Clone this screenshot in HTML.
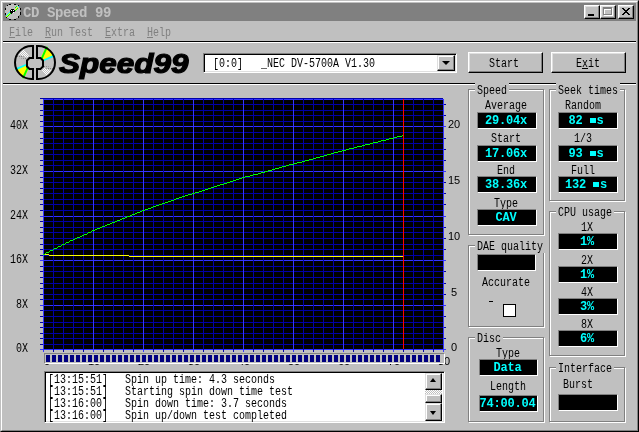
<!DOCTYPE html>
<html><head><meta charset="utf-8">
<style>
*{margin:0;padding:0;box-sizing:border-box}
html,body{width:639px;height:432px;overflow:hidden;background:#c0c0c0}
body{position:relative;font-family:"Liberation Mono",monospace;will-change:transform}
.a{position:absolute}
.t{position:absolute;font-family:"Liberation Mono",monospace;font-size:12px;line-height:12px;padding-top:1px;white-space:pre;color:#000;transform:scaleX(0.83333);transform-origin:0 0}
.v{position:absolute;font-family:"Liberation Mono",monospace;font-size:12px;font-weight:bold;letter-spacing:-0.2px;line-height:12px;white-space:pre;color:#00ffff;text-align:center}
.field{position:absolute;background:#000;border-top:1px solid #808080;border-left:1px solid #808080;border-right:1px solid #fff;border-bottom:1px solid #fff}
.gd{position:absolute;border:1px solid #808080}
.gw{position:absolute;border:1px solid #fff}
.lbl{position:absolute;background:#c0c0c0;height:14px}
.btn{position:absolute;background:#c0c0c0;border-top:1px solid #fff;border-left:1px solid #fff;border-right:1px solid #000;border-bottom:1px solid #000;box-shadow:inset -1px -1px 0 #808080, inset 1px 1px 0 #dfdfdf}
.sbtn{position:absolute;background:#c0c0c0;border-top:1px solid #dfdfdf;border-left:1px solid #dfdfdf;border-right:1px solid #000;border-bottom:1px solid #000;box-shadow:inset -1px -1px 0 #808080, inset 1px 1px 0 #fff}
.ul{text-decoration:underline}
.blk{display:inline-block;width:6px;height:5px;background:#00ffff;margin-right:1px;vertical-align:1px}
.ax{position:absolute;font-family:"Liberation Sans",sans-serif;font-size:11px;line-height:12px;color:#000;white-space:pre;text-align:center;width:20px}
</style></head><body>
<!-- window frame -->
<div class="a" style="left:0;top:0;width:639px;height:432px;border-top:1px solid #c0c0c0;border-left:1px solid #c0c0c0;border-right:1px solid #000;border-bottom:1px solid #000"></div>
<div class="a" style="left:1px;top:1px;width:637px;height:430px;border-top:1px solid #fff;border-left:1px solid #fff;border-right:1px solid #808080;border-bottom:1px solid #808080"></div>
<!-- title bar -->
<div class="a" style="left:3px;top:3px;width:633px;height:18px;background:#808080"></div>
<svg class="a" style="left:0;top:0" width="24" height="24" shape-rendering="crispEdges">
 <path d="M9 4h7v1h2v1h1v2h1v7h-1v2h-1v1h-2v1h-7v-1h-2v-1h-1v-2h-1v-7h1v-2h1v-1h2z" fill="#c0c0c0"/>
 <path d="M9 4h2v1h-2zM14 4h2v1h-2zM18 5h1v2h-1zM20 8h1v2h-1zM20 12h1v3h-1zM18 16h1v2h-1zM14 19h2v1h-2zM9 19h2v1h-2zM6 17h1v1h-1zM5 13h1v2h-1zM5 8h1v2h-1zM7 5h1v1h-1z" fill="#000"/>
 <path d="M6 15h1v1h-1zM7 14h1v1h-1zM8 13h1v1h-1zM9 12h1v1h-1zM15 9h1v1h-1zM16 8h1v1h-1zM17 7h1v1h-1zM18 6h1v1h-1z" fill="#00ffff"/>
 <path d="M6 16h1v1h-1zM7 15h1v1h-1zM8 14h1v1h-1zM9 13h1v1h-1zM10 12h1v1h-1zM14 10h1v1h-1zM15 9h1v1h-1zM16 8h1v1h-1zM17 7h1v1h-1z" fill="#ffff00"/>
 <path d="M7 16h1v1h-1zM8 15h1v1h-1zM9 14h1v1h-1zM10 13h1v1h-1zM15 10h1v1h-1zM16 9h1v1h-1zM17 8h1v1h-1zM16 6h1v1h-1zM15 7h1v1h-1z" fill="#00ff00"/>
 <path d="M11 9h3v1h1v2h-1v1h-2v1h-1v-1h-1v-3h1z" fill="#000"/>
 <path d="M11 10h1v1h-1zM13 10h1v1h-1zM13 12h1v1h-1z" fill="#fff"/>
</svg>
<div class="a" style="left:23px;top:6px;font-family:'Liberation Mono',monospace;font-weight:bold;font-size:14px;letter-spacing:-0.4px;line-height:15px;color:#c0c0c0;white-space:pre">CD Speed 99</div>
<!-- title buttons -->
<div class="btn" style="left:584px;top:5px;width:16px;height:14px"></div>
<div class="a" style="left:588px;top:14px;width:6px;height:2px;background:#000"></div>
<div class="btn" style="left:600px;top:5px;width:16px;height:14px"></div>
<div class="a" style="left:604px;top:8px;width:9px;height:8px;border:1px solid #fff;border-top-width:2px"></div>
<div class="a" style="left:603px;top:7px;width:9px;height:8px;border:1px solid #808080;border-top-width:2px"></div>
<div class="btn" style="left:618px;top:5px;width:16px;height:14px"></div>
<svg class="a" style="left:618px;top:5px" width="16" height="14" shape-rendering="crispEdges">
 <path d="M4 3h2v1h-2zM10 3h2v1h-2zM5 4h2v1h-2zM9 4h2v1h-2zM6 5h4v1h-4zM7 6h2v1h-2zM6 7h4v1h-4zM5 8h2v1h-2zM9 8h2v1h-2zM4 9h2v1h-2zM10 9h2v1h-2z" fill="#000"/>
</svg>
<!-- menu -->
<div class="t" style="left:9px;top:26px;color:#808080"><span class="ul">F</span>ile</div>
<div class="t" style="left:45px;top:26px;color:#808080"><span class="ul">R</span>un Test</div>
<div class="t" style="left:105px;top:26px;color:#808080"><span class="ul">E</span>xtra</div>
<div class="t" style="left:147px;top:26px;color:#808080"><span class="ul">H</span>elp</div>
<div class="a" style="left:3px;top:41px;width:633px;height:1px;background:#000"></div>
<div class="a" style="left:3px;top:42px;width:633px;height:1px;background:#fff"></div>
<!-- logo -->
<svg class="a" style="left:0;top:0" width="639" height="100">
<defs><pattern id="chk" width="2" height="2" patternUnits="userSpaceOnUse"><rect width="2" height="2" fill="#c0c0c0"/><rect width="1" height="1" fill="#fff"/><rect x="1" y="1" width="1" height="1" fill="#fff"/></pattern><pattern id="chk2" width="2" height="2" patternUnits="userSpaceOnUse"><rect width="2" height="2" fill="#c0c0c0"/><rect width="1" height="1" fill="#808080"/></pattern></defs>
<path d="M33 46 L31.5 46 A16.5 16.5 0 0 0 31.5 79 L33 79 Z" fill="#c0c0c0"/>
<path d="M37 46 L38.5 46 A16.5 16.5 0 0 1 38.5 79 L37 79 Z" fill="#c0c0c0"/>
<polygon points="41,57 46,46.5 55,55.5 44,60.5" fill="#ffff00"/>
<polygon points="41,58 46,46.5 48,47 42.5,59" fill="#00ff00"/>
<polygon points="43.5,59.5 54.5,54.5 55,56.5 44,61" fill="#00ffff"/>
<polygon points="43,66 54,68 48,78.5 41,69" fill="url(#chk)"/>
<polygon points="43,65.5 54,67.5 53,71 43,67.5" fill="url(#chk2)"/>
<g transform="rotate(180 35 62.5)">
<polygon points="41,57 46,46.5 55,55.5 44,60.5" fill="#ffff00"/>
<polygon points="41,58 46,46.5 48,47 42.5,59" fill="#00ff00"/>
<polygon points="43.5,59.5 54.5,54.5 55,56.5 44,61" fill="#00ffff"/>
<polygon points="43,66 54,68 48,78.5 41,69" fill="url(#chk)"/>
<polygon points="43,65.5 54,67.5 53,71 43,67.5" fill="url(#chk2)"/>
</g>
<path d="M33 58 L29.5 58 L27 60.5 L27 66.5 L29.5 69 L33 69 Z" fill="#c0c0c0"/>
<path d="M37 58 L40.5 58 L43 60.5 L43 66.5 L40.5 69 L37 69 Z" fill="#c0c0c0"/>
<path d="M33 46 L31.5 46 A16.5 16.5 0 0 0 31.5 79 L33 79 L33 69 L29.5 69 L27 66.5 L27 60.5 L29.5 58 L33 58 Z" fill="none" stroke="#000" stroke-width="2" stroke-linejoin="miter"/>
<path d="M37 46 L38.5 46 A16.5 16.5 0 0 1 38.5 79 L37 79 L37 69 L40.5 69 L43 66.5 L43 60.5 L40.5 58 L37 58 Z" fill="none" stroke="#000" stroke-width="2" stroke-linejoin="miter"/>
</svg>
<div class="a" style="left:59px;top:47px;font-family:'Liberation Sans',sans-serif;font-weight:bold;font-style:italic;font-size:27px;line-height:34px;color:#000;white-space:pre;-webkit-text-stroke:1.2px #000;transform-origin:0 0;transform:scaleX(1.165)">Speed99</div>
<!-- combo -->
<div class="a" style="left:203px;top:53px;width:254px;height:20px;background:#fff;border-top:1px solid #808080;border-left:1px solid #808080;border-right:1px solid #fff;border-bottom:1px solid #fff;box-shadow:inset 1px 1px 0 #000, inset -1px -1px 0 #dfdfdf"></div>
<div class="t" style="left:213px;top:57px">[0:0]   _NEC DV-5700A V1.30</div>
<div class="sbtn" style="left:437px;top:55px;width:18px;height:16px"></div>
<div class="a" style="left:442px;top:61px;width:0;height:0;border-left:4px solid transparent;border-right:4px solid transparent;border-top:4px solid #000"></div>
<!-- buttons -->
<div class="btn" style="left:468px;top:52px;width:75px;height:21px"></div>
<div class="t" style="left:489px;top:57px">Start</div>
<div class="btn" style="left:551px;top:52px;width:75px;height:21px"></div>
<div class="t" style="left:576px;top:57px">E<span class="ul">x</span>it</div>
<div class="a" style="left:3px;top:83px;width:633px;height:1px;background:#000"></div>
<div class="a" style="left:3px;top:84px;width:633px;height:1px;background:#fff"></div>
<!-- chart -->
<svg class="a" style="left:0;top:0" width="639" height="432" shape-rendering="crispEdges">
<rect x="44" y="99" width="399" height="250" fill="#000"/>
<rect x="40" y="344" width="403" height="1" fill="#0000a8"/>
<rect x="40" y="338" width="406" height="1" fill="#0000a8"/>
<rect x="40" y="333" width="403" height="1" fill="#0000a8"/>
<rect x="40" y="327" width="406" height="1" fill="#0000a8"/>
<rect x="40" y="322" width="403" height="1" fill="#0000a8"/>
<rect x="40" y="316" width="406" height="1" fill="#0000a8"/>
<rect x="40" y="310" width="403" height="1" fill="#0000a8"/>
<rect x="40" y="299" width="403" height="1" fill="#0000a8"/>
<rect x="40" y="294" width="406" height="1" fill="#0000a8"/>
<rect x="40" y="288" width="403" height="1" fill="#0000a8"/>
<rect x="40" y="283" width="406" height="1" fill="#0000a8"/>
<rect x="40" y="277" width="403" height="1" fill="#0000a8"/>
<rect x="40" y="271" width="406" height="1" fill="#0000a8"/>
<rect x="40" y="266" width="403" height="1" fill="#0000a8"/>
<rect x="40" y="255" width="403" height="1" fill="#0000a8"/>
<rect x="40" y="249" width="406" height="1" fill="#0000a8"/>
<rect x="40" y="244" width="403" height="1" fill="#0000a8"/>
<rect x="40" y="238" width="406" height="1" fill="#0000a8"/>
<rect x="40" y="232" width="403" height="1" fill="#0000a8"/>
<rect x="40" y="227" width="406" height="1" fill="#0000a8"/>
<rect x="40" y="221" width="403" height="1" fill="#0000a8"/>
<rect x="40" y="210" width="403" height="1" fill="#0000a8"/>
<rect x="40" y="204" width="406" height="1" fill="#0000a8"/>
<rect x="40" y="199" width="403" height="1" fill="#0000a8"/>
<rect x="40" y="193" width="406" height="1" fill="#0000a8"/>
<rect x="40" y="188" width="403" height="1" fill="#0000a8"/>
<rect x="40" y="182" width="406" height="1" fill="#0000a8"/>
<rect x="40" y="177" width="403" height="1" fill="#0000a8"/>
<rect x="40" y="165" width="403" height="1" fill="#0000a8"/>
<rect x="40" y="160" width="406" height="1" fill="#0000a8"/>
<rect x="40" y="154" width="403" height="1" fill="#0000a8"/>
<rect x="40" y="149" width="406" height="1" fill="#0000a8"/>
<rect x="40" y="143" width="403" height="1" fill="#0000a8"/>
<rect x="40" y="138" width="406" height="1" fill="#0000a8"/>
<rect x="40" y="132" width="403" height="1" fill="#0000a8"/>
<rect x="40" y="121" width="403" height="1" fill="#0000a8"/>
<rect x="40" y="115" width="406" height="1" fill="#0000a8"/>
<rect x="40" y="110" width="403" height="1" fill="#0000a8"/>
<rect x="40" y="104" width="406" height="1" fill="#0000a8"/>
<rect x="40" y="305" width="406" height="1" fill="#3434ff"/>
<rect x="40" y="260" width="406" height="1" fill="#3434ff"/>
<rect x="40" y="216" width="406" height="1" fill="#3434ff"/>
<rect x="40" y="171" width="406" height="1" fill="#3434ff"/>
<rect x="40" y="126" width="406" height="1" fill="#3434ff"/>
<rect x="40" y="349" width="406" height="1" fill="#3434ff"/>
<rect x="43" y="99" width="401" height="1" fill="#3434ff"/>
<rect x="53" y="99" width="1" height="253" fill="#0000a8"/>
<rect x="63" y="99" width="1" height="253" fill="#0000a8"/>
<rect x="73" y="99" width="1" height="253" fill="#0000a8"/>
<rect x="83" y="99" width="1" height="253" fill="#0000a8"/>
<rect x="103" y="99" width="1" height="253" fill="#0000a8"/>
<rect x="113" y="99" width="1" height="253" fill="#0000a8"/>
<rect x="123" y="99" width="1" height="253" fill="#0000a8"/>
<rect x="133" y="99" width="1" height="253" fill="#0000a8"/>
<rect x="153" y="99" width="1" height="253" fill="#0000a8"/>
<rect x="163" y="99" width="1" height="253" fill="#0000a8"/>
<rect x="173" y="99" width="1" height="253" fill="#0000a8"/>
<rect x="183" y="99" width="1" height="253" fill="#0000a8"/>
<rect x="203" y="99" width="1" height="253" fill="#0000a8"/>
<rect x="213" y="99" width="1" height="253" fill="#0000a8"/>
<rect x="223" y="99" width="1" height="253" fill="#0000a8"/>
<rect x="233" y="99" width="1" height="253" fill="#0000a8"/>
<rect x="253" y="99" width="1" height="253" fill="#0000a8"/>
<rect x="263" y="99" width="1" height="253" fill="#0000a8"/>
<rect x="273" y="99" width="1" height="253" fill="#0000a8"/>
<rect x="283" y="99" width="1" height="253" fill="#0000a8"/>
<rect x="303" y="99" width="1" height="253" fill="#0000a8"/>
<rect x="313" y="99" width="1" height="253" fill="#0000a8"/>
<rect x="323" y="99" width="1" height="253" fill="#0000a8"/>
<rect x="333" y="99" width="1" height="253" fill="#0000a8"/>
<rect x="353" y="99" width="1" height="253" fill="#0000a8"/>
<rect x="363" y="99" width="1" height="253" fill="#0000a8"/>
<rect x="373" y="99" width="1" height="253" fill="#0000a8"/>
<rect x="383" y="99" width="1" height="253" fill="#0000a8"/>
<rect x="403" y="99" width="1" height="253" fill="#0000a8"/>
<rect x="413" y="99" width="1" height="253" fill="#0000a8"/>
<rect x="423" y="99" width="1" height="253" fill="#0000a8"/>
<rect x="433" y="99" width="1" height="253" fill="#0000a8"/>
<rect x="43" y="99" width="1" height="253" fill="#3434ff"/>
<rect x="93" y="99" width="1" height="253" fill="#3434ff"/>
<rect x="143" y="99" width="1" height="253" fill="#3434ff"/>
<rect x="193" y="99" width="1" height="253" fill="#3434ff"/>
<rect x="243" y="99" width="1" height="253" fill="#3434ff"/>
<rect x="293" y="99" width="1" height="253" fill="#3434ff"/>
<rect x="343" y="99" width="1" height="253" fill="#3434ff"/>
<rect x="393" y="99" width="1" height="253" fill="#3434ff"/>
<rect x="443" y="99" width="1" height="253" fill="#3434ff"/>
<rect x="40" y="98" width="403" height="1" fill="#0000a8"/>
<rect x="44" y="254" width="5" height="1" fill="#ffff00"/>
<rect x="49" y="255" width="80" height="1" fill="#ffff00"/>
<rect x="129" y="256" width="274" height="1" fill="#ffff00"/>
<rect x="192" y="193" width="3" height="1" fill="#00ff00"/>
<rect x="327" y="154" width="4" height="1" fill="#00ff00"/>
<rect x="389" y="138" width="5" height="1" fill="#00ff00"/>
<rect x="142" y="210" width="3" height="1" fill="#00ff00"/>
<rect x="66" y="242" width="3" height="1" fill="#00ff00"/>
<rect x="165" y="202" width="3" height="1" fill="#00ff00"/>
<rect x="354" y="147" width="3" height="1" fill="#00ff00"/>
<rect x="199" y="191" width="3" height="1" fill="#00ff00"/>
<rect x="334" y="152" width="4" height="1" fill="#00ff00"/>
<rect x="397" y="136" width="5" height="1" fill="#00ff00"/>
<rect x="316" y="157" width="4" height="1" fill="#00ff00"/>
<rect x="378" y="141" width="3" height="1" fill="#00ff00"/>
<rect x="148" y="208" width="3" height="1" fill="#00ff00"/>
<rect x="87" y="233" width="1" height="1" fill="#00ff00"/>
<rect x="117" y="220" width="3" height="1" fill="#00ff00"/>
<rect x="53" y="249" width="1" height="1" fill="#00ff00"/>
<rect x="171" y="200" width="3" height="1" fill="#00ff00"/>
<rect x="95" y="229" width="2" height="1" fill="#00ff00"/>
<rect x="227" y="182" width="3" height="1" fill="#00ff00"/>
<rect x="205" y="189" width="3" height="1" fill="#00ff00"/>
<rect x="313" y="158" width="3" height="1" fill="#00ff00"/>
<rect x="49" y="251" width="1" height="1" fill="#00ff00"/>
<rect x="324" y="155" width="3" height="1" fill="#00ff00"/>
<rect x="386" y="139" width="3" height="1" fill="#00ff00"/>
<rect x="294" y="163" width="3" height="1" fill="#00ff00"/>
<rect x="365" y="144" width="5" height="1" fill="#00ff00"/>
<rect x="233" y="180" width="3" height="1" fill="#00ff00"/>
<rect x="211" y="187" width="3" height="1" fill="#00ff00"/>
<rect x="137" y="212" width="3" height="1" fill="#00ff00"/>
<rect x="349" y="148" width="5" height="1" fill="#00ff00"/>
<rect x="62" y="244" width="3" height="1" fill="#00ff00"/>
<rect x="107" y="224" width="3" height="1" fill="#00ff00"/>
<rect x="245" y="176" width="5" height="1" fill="#00ff00"/>
<rect x="159" y="204" width="3" height="1" fill="#00ff00"/>
<rect x="394" y="137" width="3" height="1" fill="#00ff00"/>
<rect x="373" y="142" width="5" height="1" fill="#00ff00"/>
<rect x="258" y="173" width="3" height="1" fill="#00ff00"/>
<rect x="176" y="198" width="3" height="1" fill="#00ff00"/>
<rect x="239" y="178" width="3" height="1" fill="#00ff00"/>
<rect x="217" y="185" width="3" height="1" fill="#00ff00"/>
<rect x="82" y="235" width="2" height="1" fill="#00ff00"/>
<rect x="112" y="222" width="3" height="1" fill="#00ff00"/>
<rect x="381" y="140" width="5" height="1" fill="#00ff00"/>
<rect x="275" y="168" width="4" height="1" fill="#00ff00"/>
<rect x="362" y="145" width="3" height="1" fill="#00ff00"/>
<rect x="331" y="153" width="3" height="1" fill="#00ff00"/>
<rect x="182" y="196" width="3" height="1" fill="#00ff00"/>
<rect x="45" y="253" width="1" height="1" fill="#00ff00"/>
<rect x="302" y="161" width="3" height="1" fill="#00ff00"/>
<rect x="156" y="205" width="3" height="1" fill="#00ff00"/>
<rect x="92" y="230" width="3" height="1" fill="#00ff00"/>
<rect x="282" y="166" width="4" height="1" fill="#00ff00"/>
<rect x="58" y="246" width="3" height="1" fill="#00ff00"/>
<rect x="338" y="151" width="4" height="1" fill="#00ff00"/>
<rect x="102" y="226" width="3" height="1" fill="#00ff00"/>
<rect x="236" y="179" width="3" height="1" fill="#00ff00"/>
<rect x="54" y="248" width="3" height="1" fill="#00ff00"/>
<rect x="289" y="164" width="5" height="1" fill="#00ff00"/>
<rect x="195" y="192" width="4" height="1" fill="#00ff00"/>
<rect x="77" y="237" width="3" height="1" fill="#00ff00"/>
<rect x="145" y="209" width="3" height="1" fill="#00ff00"/>
<rect x="242" y="177" width="3" height="1" fill="#00ff00"/>
<rect x="265" y="171" width="3" height="1" fill="#00ff00"/>
<rect x="224" y="183" width="3" height="1" fill="#00ff00"/>
<rect x="202" y="190" width="3" height="1" fill="#00ff00"/>
<rect x="320" y="156" width="4" height="1" fill="#00ff00"/>
<rect x="151" y="207" width="2" height="1" fill="#00ff00"/>
<rect x="88" y="232" width="3" height="1" fill="#00ff00"/>
<rect x="357" y="146" width="5" height="1" fill="#00ff00"/>
<rect x="125" y="217" width="2" height="1" fill="#00ff00"/>
<rect x="272" y="169" width="3" height="1" fill="#00ff00"/>
<rect x="179" y="197" width="3" height="1" fill="#00ff00"/>
<rect x="253" y="174" width="5" height="1" fill="#00ff00"/>
<rect x="230" y="181" width="3" height="1" fill="#00ff00"/>
<rect x="135" y="213" width="2" height="1" fill="#00ff00"/>
<rect x="50" y="250" width="3" height="1" fill="#00ff00"/>
<rect x="309" y="159" width="4" height="1" fill="#00ff00"/>
<rect x="162" y="203" width="3" height="1" fill="#00ff00"/>
<rect x="279" y="167" width="3" height="1" fill="#00ff00"/>
<rect x="70" y="240" width="3" height="1" fill="#00ff00"/>
<rect x="261" y="172" width="4" height="1" fill="#00ff00"/>
<rect x="100" y="227" width="2" height="1" fill="#00ff00"/>
<rect x="140" y="211" width="2" height="1" fill="#00ff00"/>
<rect x="220" y="184" width="4" height="1" fill="#00ff00"/>
<rect x="110" y="223" width="2" height="1" fill="#00ff00"/>
<rect x="168" y="201" width="3" height="1" fill="#00ff00"/>
<rect x="286" y="165" width="3" height="1" fill="#00ff00"/>
<rect x="297" y="162" width="5" height="1" fill="#00ff00"/>
<rect x="43" y="254" width="2" height="1" fill="#00ff00"/>
<rect x="84" y="234" width="3" height="1" fill="#00ff00"/>
<rect x="250" y="175" width="3" height="1" fill="#00ff00"/>
<rect x="120" y="219" width="2" height="1" fill="#00ff00"/>
<rect x="208" y="188" width="3" height="1" fill="#00ff00"/>
<rect x="185" y="195" width="3" height="1" fill="#00ff00"/>
<rect x="346" y="149" width="3" height="1" fill="#00ff00"/>
<rect x="46" y="252" width="3" height="1" fill="#00ff00"/>
<rect x="127" y="216" width="3" height="1" fill="#00ff00"/>
<rect x="105" y="225" width="2" height="1" fill="#00ff00"/>
<rect x="214" y="186" width="3" height="1" fill="#00ff00"/>
<rect x="132" y="214" width="3" height="1" fill="#00ff00"/>
<rect x="305" y="160" width="4" height="1" fill="#00ff00"/>
<rect x="342" y="150" width="4" height="1" fill="#00ff00"/>
<rect x="153" y="206" width="3" height="1" fill="#00ff00"/>
<rect x="268" y="170" width="4" height="1" fill="#00ff00"/>
<rect x="122" y="218" width="3" height="1" fill="#00ff00"/>
<rect x="97" y="228" width="3" height="1" fill="#00ff00"/>
<rect x="188" y="194" width="4" height="1" fill="#00ff00"/>
<rect x="73" y="239" width="2" height="1" fill="#00ff00"/>
<rect x="402" y="135" width="2" height="1" fill="#00ff00"/>
<rect x="69" y="241" width="1" height="1" fill="#00ff00"/>
<rect x="370" y="143" width="3" height="1" fill="#00ff00"/>
<rect x="80" y="236" width="2" height="1" fill="#00ff00"/>
<rect x="115" y="221" width="2" height="1" fill="#00ff00"/>
<rect x="130" y="215" width="2" height="1" fill="#00ff00"/>
<rect x="65" y="243" width="1" height="1" fill="#00ff00"/>
<rect x="75" y="238" width="2" height="1" fill="#00ff00"/>
<rect x="174" y="199" width="2" height="1" fill="#00ff00"/>
<rect x="91" y="231" width="1" height="1" fill="#00ff00"/>
<rect x="61" y="245" width="1" height="1" fill="#00ff00"/>
<rect x="57" y="247" width="1" height="1" fill="#00ff00"/>
<rect x="403" y="99" width="1" height="250" fill="#ff0000"/>
</svg>
<div class="t" style="left:10px;top:119px">40X</div>
<div class="t" style="left:10px;top:164px">32X</div>
<div class="t" style="left:10px;top:209px">24X</div>
<div class="t" style="left:10px;top:253px">16X</div>
<div class="t" style="left:16px;top:298px">8X</div>
<div class="t" style="left:16px;top:342px">0X</div>
<div class="ax" style="left:444px;top:118px">20</div>
<div class="ax" style="left:444px;top:174px">15</div>
<div class="ax" style="left:444px;top:230px">10</div>
<div class="ax" style="left:444px;top:286px">5</div>
<div class="ax" style="left:444px;top:341px">0</div>
<!-- progress -->
<div class="ax" style="left:37px;top:355px">0</div>
<div class="ax" style="left:84px;top:355px">10</div>
<div class="ax" style="left:134px;top:355px">20</div>
<div class="ax" style="left:184px;top:355px">30</div>
<div class="ax" style="left:234px;top:355px">40</div>
<div class="ax" style="left:284px;top:355px">50</div>
<div class="ax" style="left:334px;top:355px">60</div>
<div class="ax" style="left:384px;top:355px">70</div>
<div class="ax" style="left:434px;top:355px">80</div>
<div class="a" style="left:44px;top:353px;width:401px;height:11px;background:#c0c0c0;border-top:1px solid #808080;border-left:1px solid #808080;border-right:1px solid #fff;border-bottom:1px solid #fff"></div>
<svg class="a" style="left:0;top:340px" width="460" height="30" shape-rendering="crispEdges">
<rect x="46" y="15" width="4" height="7" fill="#000080"/>
<rect x="52" y="15" width="4" height="7" fill="#000080"/>
<rect x="58" y="15" width="4" height="7" fill="#000080"/>
<rect x="64" y="15" width="4" height="7" fill="#000080"/>
<rect x="70" y="15" width="4" height="7" fill="#000080"/>
<rect x="76" y="15" width="4" height="7" fill="#000080"/>
<rect x="82" y="15" width="4" height="7" fill="#000080"/>
<rect x="88" y="15" width="4" height="7" fill="#000080"/>
<rect x="94" y="15" width="4" height="7" fill="#000080"/>
<rect x="100" y="15" width="4" height="7" fill="#000080"/>
<rect x="106" y="15" width="4" height="7" fill="#000080"/>
<rect x="112" y="15" width="4" height="7" fill="#000080"/>
<rect x="118" y="15" width="4" height="7" fill="#000080"/>
<rect x="124" y="15" width="4" height="7" fill="#000080"/>
<rect x="130" y="15" width="4" height="7" fill="#000080"/>
<rect x="136" y="15" width="4" height="7" fill="#000080"/>
<rect x="142" y="15" width="4" height="7" fill="#000080"/>
<rect x="148" y="15" width="4" height="7" fill="#000080"/>
<rect x="154" y="15" width="4" height="7" fill="#000080"/>
<rect x="160" y="15" width="4" height="7" fill="#000080"/>
<rect x="166" y="15" width="4" height="7" fill="#000080"/>
<rect x="172" y="15" width="4" height="7" fill="#000080"/>
<rect x="178" y="15" width="4" height="7" fill="#000080"/>
<rect x="184" y="15" width="4" height="7" fill="#000080"/>
<rect x="190" y="15" width="4" height="7" fill="#000080"/>
<rect x="196" y="15" width="4" height="7" fill="#000080"/>
<rect x="202" y="15" width="4" height="7" fill="#000080"/>
<rect x="208" y="15" width="4" height="7" fill="#000080"/>
<rect x="214" y="15" width="4" height="7" fill="#000080"/>
<rect x="220" y="15" width="4" height="7" fill="#000080"/>
<rect x="226" y="15" width="4" height="7" fill="#000080"/>
<rect x="232" y="15" width="4" height="7" fill="#000080"/>
<rect x="238" y="15" width="4" height="7" fill="#000080"/>
<rect x="244" y="15" width="4" height="7" fill="#000080"/>
<rect x="250" y="15" width="4" height="7" fill="#000080"/>
<rect x="256" y="15" width="4" height="7" fill="#000080"/>
<rect x="262" y="15" width="4" height="7" fill="#000080"/>
<rect x="268" y="15" width="4" height="7" fill="#000080"/>
<rect x="274" y="15" width="4" height="7" fill="#000080"/>
<rect x="280" y="15" width="4" height="7" fill="#000080"/>
<rect x="286" y="15" width="4" height="7" fill="#000080"/>
<rect x="292" y="15" width="4" height="7" fill="#000080"/>
<rect x="298" y="15" width="4" height="7" fill="#000080"/>
<rect x="304" y="15" width="4" height="7" fill="#000080"/>
<rect x="310" y="15" width="4" height="7" fill="#000080"/>
<rect x="316" y="15" width="4" height="7" fill="#000080"/>
<rect x="322" y="15" width="4" height="7" fill="#000080"/>
<rect x="328" y="15" width="4" height="7" fill="#000080"/>
<rect x="334" y="15" width="4" height="7" fill="#000080"/>
<rect x="340" y="15" width="4" height="7" fill="#000080"/>
<rect x="346" y="15" width="4" height="7" fill="#000080"/>
<rect x="352" y="15" width="4" height="7" fill="#000080"/>
<rect x="358" y="15" width="4" height="7" fill="#000080"/>
<rect x="364" y="15" width="4" height="7" fill="#000080"/>
<rect x="370" y="15" width="4" height="7" fill="#000080"/>
<rect x="376" y="15" width="4" height="7" fill="#000080"/>
<rect x="382" y="15" width="4" height="7" fill="#000080"/>
<rect x="388" y="15" width="4" height="7" fill="#000080"/>
<rect x="394" y="15" width="4" height="7" fill="#000080"/>
<rect x="400" y="15" width="4" height="7" fill="#000080"/>
<rect x="406" y="15" width="4" height="7" fill="#000080"/>
<rect x="412" y="15" width="4" height="7" fill="#000080"/>
<rect x="418" y="15" width="4" height="7" fill="#000080"/>
<rect x="424" y="15" width="4" height="7" fill="#000080"/>
<rect x="430" y="15" width="4" height="7" fill="#000080"/>
<rect x="436" y="15" width="4" height="7" fill="#000080"/>
</svg>
<!-- listbox -->
<div class="a" style="left:44px;top:371px;width:401px;height:52px;background:#fff;border-top:1px solid #808080;border-left:1px solid #808080;border-right:1px solid #fff;border-bottom:1px solid #fff;box-shadow:inset 1px 1px 0 #000, inset -1px -1px 0 #dfdfdf"></div>
<div class="t" style="left:48px;top:373px;line-height:12px">[13:15:51]</div>
<div class="t" style="left:48px;top:385px">[13:15:51]</div>
<div class="t" style="left:48px;top:397px">[13:16:00]</div>
<div class="t" style="left:48px;top:409px">[13:16:00]</div>
<div class="t" style="left:125px;top:373px">Spin up time: 4.3 seconds</div>
<div class="t" style="left:125px;top:385px">Starting spin down time test</div>
<div class="t" style="left:125px;top:397px">Spin down time: 3.7 seconds</div>
<div class="t" style="left:125px;top:409px">Spin up/down test completed</div>
<div class="a" style="left:425px;top:373px;width:17px;height:48px;background:repeating-conic-gradient(#fff 0 25%, #c0c0c0 0 50%) 0 0/2px 2px"></div>
<div class="sbtn" style="left:425px;top:373px;width:17px;height:17px"></div>
<div class="a" style="left:430px;top:378px;width:0;height:0;border-left:3.5px solid transparent;border-right:3.5px solid transparent;border-bottom:4px solid #000"></div>
<div class="sbtn" style="left:425px;top:394px;width:17px;height:9px"></div>
<div class="sbtn" style="left:425px;top:403px;width:17px;height:18px"></div>
<div class="a" style="left:430px;top:411px;width:0;height:0;border-left:3.5px solid transparent;border-right:3.5px solid transparent;border-top:4px solid #000"></div>
<!-- groups -->
<div class="gw" style="left:469px;top:90px;width:76px;height:146px"></div>
<div class="gd" style="left:468px;top:89px;width:76px;height:146px"></div>
<div class="lbl" style="left:475px;top:83px;width:34px"></div>
<div class="t" style="left:477px;top:84px">Speed</div>
<div class="gw" style="left:550px;top:90px;width:76px;height:112px"></div>
<div class="gd" style="left:549px;top:89px;width:76px;height:112px"></div>
<div class="lbl" style="left:556px;top:83px;width:64px"></div>
<div class="t" style="left:558px;top:84px">Seek times</div>
<div class="gw" style="left:550px;top:212px;width:76px;height:145px"></div>
<div class="gd" style="left:549px;top:211px;width:76px;height:145px"></div>
<div class="lbl" style="left:556px;top:205px;width:58px"></div>
<div class="t" style="left:558px;top:206px">CPU usage</div>
<div class="gw" style="left:469px;top:246px;width:76px;height:82px"></div>
<div class="gd" style="left:468px;top:245px;width:76px;height:82px"></div>
<div class="lbl" style="left:475px;top:239px;width:70px"></div>
<div class="t" style="left:477px;top:240px">DAE quality</div>
<div class="gw" style="left:469px;top:338px;width:76px;height:85px"></div>
<div class="gd" style="left:468px;top:337px;width:76px;height:85px"></div>
<div class="lbl" style="left:475px;top:331px;width:28px"></div>
<div class="t" style="left:477px;top:332px">Disc</div>
<div class="gw" style="left:550px;top:368px;width:76px;height:55px"></div>
<div class="gd" style="left:549px;top:367px;width:76px;height:55px"></div>
<div class="lbl" style="left:556px;top:361px;width:58px"></div>
<div class="t" style="left:558px;top:362px">Interface</div>
<div class="t" style="left:485.0px;top:99px">Average</div>
<div class="field" style="left:477px;top:112px;width:60px;height:17px"></div>
<div class="v" style="left:476px;top:115px;width:60px">29.04x</div>
<div class="t" style="left:491.0px;top:132px">Start</div>
<div class="field" style="left:477px;top:145px;width:60px;height:17px"></div>
<div class="v" style="left:476px;top:148px;width:60px">17.06x</div>
<div class="t" style="left:497.0px;top:164px">End</div>
<div class="field" style="left:477px;top:176px;width:60px;height:17px"></div>
<div class="v" style="left:476px;top:179px;width:60px">38.36x</div>
<div class="t" style="left:494.0px;top:197px">Type</div>
<div class="field" style="left:477px;top:209px;width:60px;height:17px"></div>
<div class="v" style="left:476px;top:212px;width:60px">CAV</div>
<div class="t" style="left:565.0px;top:99px">Random</div>
<div class="field" style="left:558px;top:112px;width:60px;height:17px"></div>
<div class="v" style="left:556px;top:115px;width:60px">82 <i class="blk"></i>s</div>
<div class="t" style="left:574.0px;top:132px">1/3</div>
<div class="field" style="left:558px;top:145px;width:60px;height:17px"></div>
<div class="v" style="left:556px;top:148px;width:60px">93 <i class="blk"></i>s</div>
<div class="t" style="left:571.0px;top:164px">Full</div>
<div class="field" style="left:558px;top:176px;width:60px;height:17px"></div>
<div class="v" style="left:556px;top:179px;width:60px">132 <i class="blk"></i>s</div>
<div class="t" style="left:581.0px;top:221px">1X</div>
<div class="field" style="left:558px;top:233px;width:60px;height:17px"></div>
<div class="v" style="left:557px;top:236px;width:60px">1%</div>
<div class="t" style="left:581.0px;top:254px">2X</div>
<div class="field" style="left:558px;top:266px;width:60px;height:17px"></div>
<div class="v" style="left:557px;top:269px;width:60px">1%</div>
<div class="t" style="left:581.0px;top:286px">4X</div>
<div class="field" style="left:558px;top:298px;width:60px;height:17px"></div>
<div class="v" style="left:557px;top:301px;width:60px">3%</div>
<div class="t" style="left:581.0px;top:318px">8X</div>
<div class="field" style="left:558px;top:330px;width:60px;height:17px"></div>
<div class="v" style="left:557px;top:333px;width:60px">6%</div>
<div class="field" style="left:477px;top:254px;width:59px;height:17px"></div>
<div class="t" style="left:482.0px;top:276px">Accurate</div>
<div class="a" style="left:489px;top:301px;width:4px;height:1px;background:#000"></div>
<div class="a" style="left:503px;top:304px;width:13px;height:13px;background:#fff;border:1px solid #000"></div>
<div class="t" style="left:495.5px;top:347px">Type</div>
<div class="field" style="left:479px;top:359px;width:59px;height:17px"></div>
<div class="v" style="left:478px;top:362px;width:59px">Data</div>
<div class="t" style="left:489.5px;top:380px">Length</div>
<div class="field" style="left:479px;top:395px;width:59px;height:17px"></div>
<div class="v" style="left:478px;top:398px;width:59px">74:00.04</div>
<div class="t" style="left:563px;top:378px">Burst</div>
<div class="field" style="left:558px;top:394px;width:60px;height:17px"></div>
</body></html>
